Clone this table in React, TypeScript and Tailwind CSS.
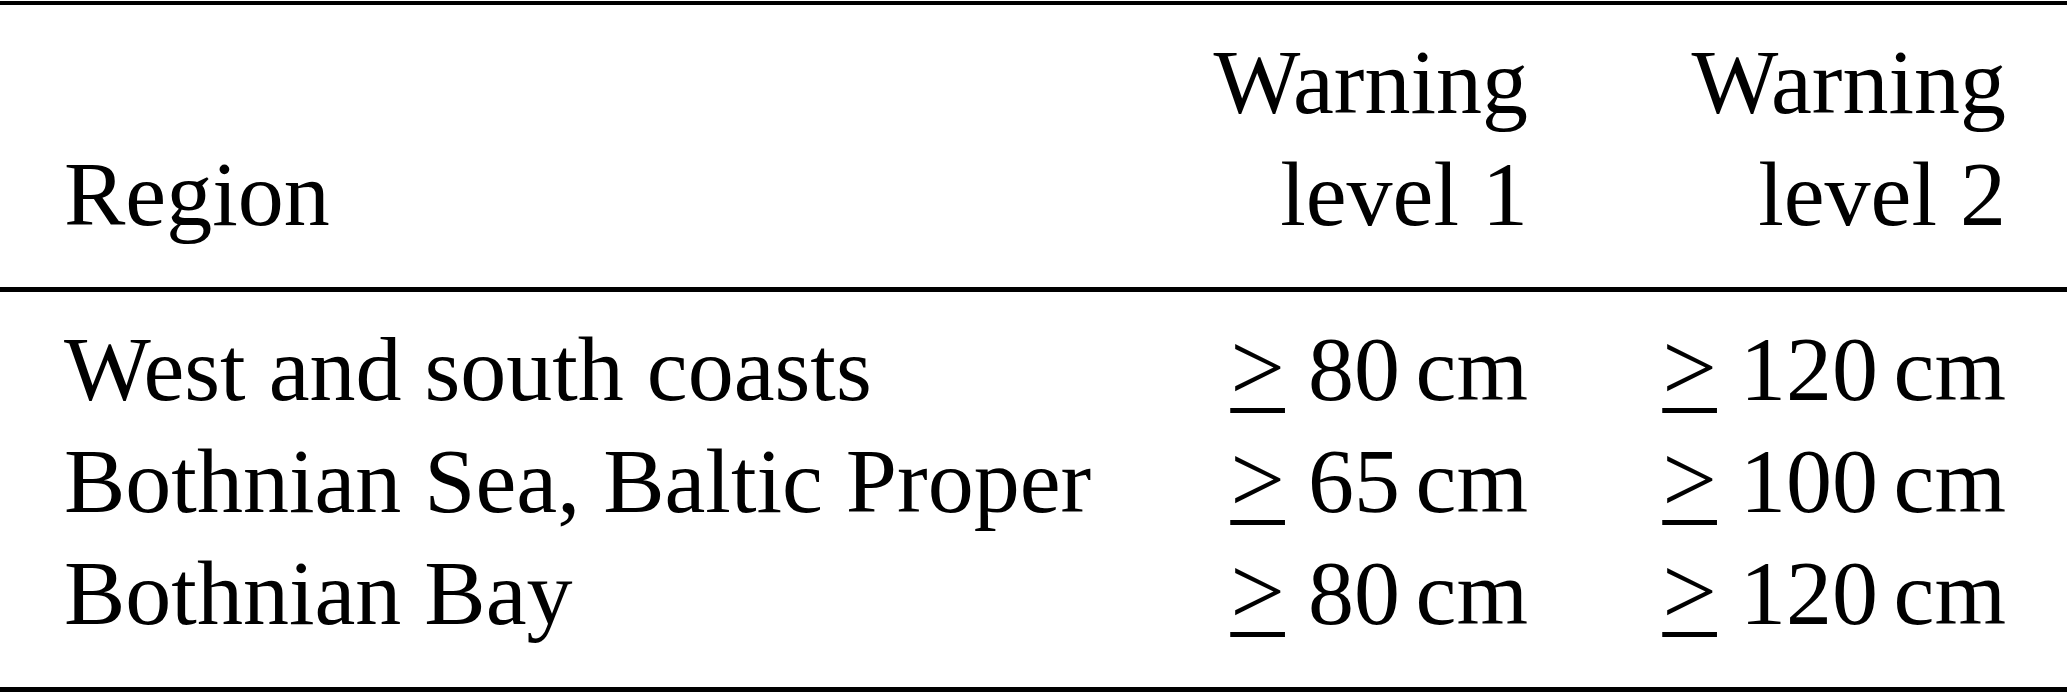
import React from "react";

interface Row {
    region: string;
    level1: string;
    level2: string;
}

const rows: Row[] = [
    { region: "West and south coasts", level1: "80", level2: "120" },
    { region: "Bothnian Sea, Baltic Proper", level1: "65", level2: "100" },
    { region: "Bothnian Bay", level1: "80", level2: "120" },
];

// TeX-style \geq: a ">" sitting over a flat bar
function Geq() {
    return (
        <span className="text-[97px] leading-none underline decoration-[5px] underline-offset-[8px] [text-decoration-skip-ink:none]">
            &gt;
        </span>
    );
}

function Value({ n }: { n: string }) {
    return (
        <span className="whitespace-nowrap">
            <Geq />
            <span className="ml-[0.25em]">{n}</span>
            <span className="ml-[0.17em]">cm</span>
        </span>
    );
}

export default function App() {
    return (
        <div className="w-[2067px] h-[692px] bg-white text-black font-['Liberation_Serif','Times_New_Roman',serif] text-[92px] leading-[112px]">
            {/* top rule */}
            <div className="pt-px">
                <div className="h-[4px] bg-black" />
            </div>

            {/* header */}
            <div className="grid grid-cols-[1fr_427px_478px] pl-[64px] pr-[61px] pt-[21px] pb-[37px]">
                <div className="flex items-end">Region</div>
                <div className="text-right">
                    <div>Warning</div>
                    <div>level 1</div>
                </div>
                <div className="text-right">
                    <div>Warning</div>
                    <div>level 2</div>
                </div>
            </div>

            {/* mid rule */}
            <div className="h-[5px] bg-black" />

            {/* body */}
            <div className="grid grid-cols-[1fr_427px_478px] pl-[64px] pr-[61px] pt-[21px] pb-[38px]">
                {rows.map((r, i) => (
                    <React.Fragment key={i}>
                        <div className="whitespace-nowrap">{r.region}</div>
                        <div className="text-right"><Value n={r.level1} /></div>
                        <div className="text-right"><Value n={r.level2} /></div>
                    </React.Fragment>
                ))}
            </div>

            {/* bottom rule */}
            <div className="h-[5px] bg-black" />
        </div>
    );
}
